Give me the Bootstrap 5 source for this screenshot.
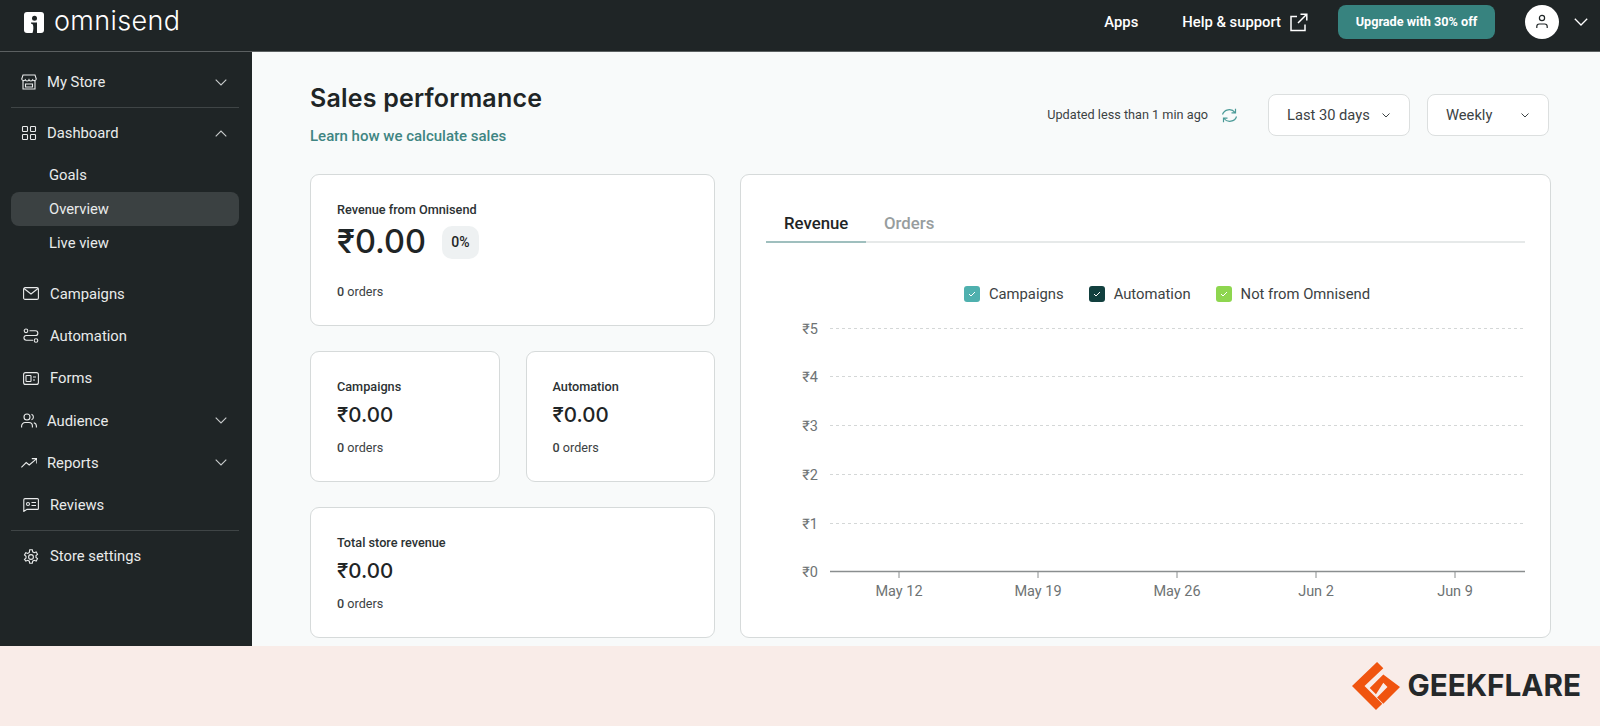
<!DOCTYPE html>
<html lang="en">
<head>
  <meta charset="UTF-8" />
  <title>Omnisend - Sales performance</title>
  <link href="https://cdn.jsdelivr.net/npm/bootstrap@5.3.3/dist/css/bootstrap.min.css" rel="stylesheet">
  <style>
    html, body { height: 726px; overflow: hidden; }
    body { font-family: Roboto, "Liberation Sans", sans-serif; background: #f9ece8; color: #1f2526; }
    .app { height: 646px; overflow: hidden; }
    .topbar { height: 52px; padding-bottom: 7px; background: #1f2526; border-bottom: 1px solid #5b6061; color: #fff; }
    .logo-text { font-family: Inter, sans-serif; font-weight: 300; font-size: 27px; letter-spacing: .35px; line-height: 1; margin-left: 10px; padding-bottom: 3px; }
    .top-link { font-size: 14.8px; font-weight: 500; color: #fff; text-decoration: none; }
    .btn-upgrade { width: 157px; height: 34px; padding: 0; border-radius: 8px; background: #37837f; color: #fff; font-size: 12.7px; font-weight: 700; border: 0; }
    .avatar { width: 34px; height: 34px; background: #fff; }
    .sidebar { width: 252px; background: #1f2526; color: #e9ebeb; font-size: 14.8px; padding-top: 9px; flex-shrink: 0; }
    .side-item { height: 42.3px; padding: 0 25px 0 23px; gap: 11px; }
    .side-item.caret { padding-left: 21px; gap: 10px; }
    .side-item .chev { margin-left: auto; }
    .side-sub { height: 34px; margin: 0 13px 0 11px; padding-left: 38px; border-radius: 8px; }
    .side-sub.active { background: #3b4142; }
    .side-line { height: 1px; margin: 0 13px 0 11px; background: #3f4546; }
    .main { background: #f8fafa; padding: 30px 51px 0 58px; }
    .page-title { font-family: Inter, sans-serif; font-size: 25px; font-weight: 600; line-height: 32px; letter-spacing: .2px; margin: 0; }
    .learn { display: block; margin-top: 12px; height: 20px; line-height: 20px; color: #3f8582; font-size: 15px; font-weight: 500; text-decoration: none; }
    .updated { font-size: 12.7px; color: #3c4243; }
    .select-box { height: 42px; background: #fff; border: 1px solid #dcdfdf; border-radius: 8px; font-size: 14.7px; color: #3c4243; padding: 0 19px 0 18px; }
    .cols { gap: 25px; margin-top: 28px; }
    .left { width: 405px; flex-shrink: 0; }
    .half { flex: 1 1 0; }
    .stat { border-radius: 9px; border-color: #d6dada; }
    .stat .card-body { padding: 25px 26px 0; }
    .stat-label { font-size: 12.7px; font-weight: 500; line-height: 20px; color: #2c3233; }
    .stat-value { font-family: Inter, sans-serif; font-weight: 500; font-size: 20.5px; line-height: 30px; margin-top: 3px; }
    .stat-value.big { font-size: 32.5px; line-height: 40px; margin-top: 2px; }
    .stat-orders { font-size: 12.6px; line-height: 20px; margin-top: 8px; color: #3c4243; }
    .stat-orders b { font-weight: 500; }
    .pct { width: 37px; height: 33px; border-radius: 10px; background: #eef1f2; font-size: 14px; font-weight: 500; }
    .chart-card { padding: 27px 25px 0; }
    .tabs { height: 41px; border-bottom: 2px solid #e6e9e9; }
    .tab { width: 100px; height: 41px; padding-left: 18px; font-size: 16.8px; font-weight: 500; line-height: 42px; color: #979d9e; }
    .tab.active { color: #1f2526; border-bottom: 2px solid #9fbfbe; }
    .legend { margin-top: 41px; margin-bottom: 12px; padding-left: 43px; gap: 25px; font-size: 14.8px; color: #3c4243; line-height: 20px; }
    .legend .gap-2 { gap: 9px !important; }
    .swatch { width: 16px; height: 16px; border-radius: 3px; }
    .chart-svg { display: block; }
    .chart-svg text { font-family: Roboto, sans-serif; font-size: 14.5px; fill: #6e7374; }
    .footer-band { height: 80px; padding-right: 19px; }
    .gf-text { font-family: Inter, sans-serif; font-weight: 700; font-size: 29.7px; color: #25282a; line-height: 1; margin-left: 7px; }
  </style>
</head>
<body>
  <div class="app d-flex flex-column">
    <header class="topbar d-flex align-items-center flex-shrink-0">
      <svg class="ms-4" width="20" height="21" viewBox="0 0 20 21"><rect width="20" height="21" rx="3" fill="#fff"/><circle cx="10.500" cy="6.200" r="2.500" fill="#1f2526"/><path d="M7 10.500h6V21H8.500C9.500 18 9.600 15 9 13c-.3-.9-1-1.300-2-1.300z" fill="#1f2526"/></svg>
      <span class="logo-text">omnisend</span>
      <nav class="ms-auto d-flex align-items-center">
        <a class="top-link" href="#">Apps</a>
        <a class="top-link d-flex align-items-center" href="#" style="margin-left:44px">Help &amp; support
          <svg class="ms-2" width="19" height="19" viewBox="0 0 19 19" fill="none" stroke="#fff" stroke-width="1.5"><path d="M8 3.500H2v14h14v-6M9 10 17.500 1.500M11.500 1.200h6.300v6.300"/></svg>
        </a>
        <button class="btn btn-upgrade" style="margin-left:30px">Upgrade with 30% off</button>
        <span class="avatar rounded-circle d-flex align-items-center justify-content-center" style="margin-left:30px">
          <svg width="16" height="16" viewBox="0 0 16 16" fill="none" stroke="#1f2526" stroke-width="1.200"><circle cx="8" cy="4" r="2.600"/><path d="M2.800 14v-1.500A2.500 2.500 0 0 1 5.300 10h5.400a2.500 2.500 0 0 1 2.500 2.500V14"/></svg>
        </span>
        <svg style="margin:0 12px 0 15px" width="14" height="8" viewBox="0 0 14 8" fill="none" stroke="#fff" stroke-width="1.300"><path d="M.8.800 7 7l6.200-6.200"/></svg>
      </nav>
    </header>
    <div class="d-flex flex-grow-1">
      <aside class="sidebar">
        <div class="side-item caret d-flex align-items-center">
          <svg width="16" height="16" viewBox="0 0 16 16" fill="none" stroke="#e9ebeb" stroke-width="1.100"><path d="M2 1h12l1.300 4a2 2 0 0 1-3.600.8 2 2 0 0 1-3.700 0 2 2 0 0 1-3.700 0A2 2 0 0 1 .7 5zM2 7v8h12V7M4.500 10h7v3h-7z"/></svg>
          My Store
          <svg class="chev" width="12" height="7" viewBox="0 0 12 7" fill="none" stroke="#c9cccc" stroke-width="1.100"><path d="M.7.700 6 6l5.300-5.300"/></svg>
        </div>
        <div class="side-line" style="margin-top:4px"></div>
        <div class="side-item caret d-flex align-items-center" style="margin-top:4px">
          <svg width="16" height="16" viewBox="0 0 16 16" fill="none" stroke="#e9ebeb" stroke-width="1.100"><rect x="1.500" y="1.500" width="5" height="5" rx=".8"/><rect x="9.500" y="1.500" width="5" height="5" rx=".8"/><rect x="1.500" y="9.500" width="5" height="5" rx=".8"/><rect x="9.500" y="9.500" width="5" height="5" rx=".8"/></svg>
          Dashboard
          <svg class="chev" width="12" height="7" viewBox="0 0 12 7" fill="none" stroke="#c9cccc" stroke-width="1.100"><path d="M.7 6.300 6 1l5.300 5.300"/></svg>
        </div>
        <div style="margin-top:3px">
          <div class="side-sub d-flex align-items-center">Goals</div>
          <div class="side-sub active d-flex align-items-center">Overview</div>
          <div class="side-sub d-flex align-items-center">Live view</div>
        </div>
        <div style="margin-top:13px">
          <div class="side-item d-flex align-items-center">
            <svg width="16" height="13" viewBox="0 0 16 13" fill="none" stroke="#e9ebeb" stroke-width="1.100"><rect x=".6" y=".6" width="14.800" height="11.800" rx="1.500"/><path d="M1 1.500 8 7l7-5.500"/></svg>
            Campaigns
          </div>
          <div class="side-item d-flex align-items-center">
            <svg width="16" height="16" viewBox="0 0 16 16" fill="none" stroke="#e9ebeb" stroke-width="1.100"><circle cx="3" cy="2.800" r="1.800"/><path d="M6.500 2.800h6a2.300 2.300 0 0 1 0 4.700H3.300a2.300 2.300 0 0 0 0 4.700H10"/><circle cx="13" cy="12.500" r="1.800"/></svg>
            Automation
          </div>
          <div class="side-item d-flex align-items-center">
            <svg width="16" height="13" viewBox="0 0 16 13" fill="none" stroke="#e9ebeb" stroke-width="1.100"><rect x=".6" y=".6" width="14.800" height="11.800" rx="2"/><rect x="3" y="3.500" width="5" height="6" rx=".6"/><path d="M10 5h3M10 8h2"/></svg>
            Forms
          </div>
          <div class="side-item caret d-flex align-items-center">
            <svg width="16" height="15" viewBox="0 0 16 15" fill="none" stroke="#e9ebeb" stroke-width="1.100"><circle cx="6" cy="4" r="3"/><path d="M.6 14.500V13a3.500 3.500 0 0 1 3.500-3.500h3.800a3.500 3.500 0 0 1 3.500 3.500v1.500M10.500 1.200a3 3 0 0 1 0 5.600M12.800 9.700a3.500 3.500 0 0 1 2.600 3.300v1.500"/></svg>
            Audience
            <svg class="chev" width="12" height="7" viewBox="0 0 12 7" fill="none" stroke="#c9cccc" stroke-width="1.100"><path d="M.7.700 6 6l5.300-5.300"/></svg>
          </div>
          <div class="side-item caret d-flex align-items-center">
            <svg width="16" height="10" viewBox="0 0 16 10" fill="none" stroke="#e9ebeb" stroke-width="1.100"><path d="M.4 9.400 5.200 4.500l3 2.500L15.500.8M10.800.6h5v5"/></svg>
            Reports
            <svg class="chev" width="12" height="7" viewBox="0 0 12 7" fill="none" stroke="#c9cccc" stroke-width="1.100"><path d="M.7.700 6 6l5.300-5.300"/></svg>
          </div>
          <div class="side-item d-flex align-items-center">
            <svg width="16" height="14" viewBox="0 0 16 14" fill="none" stroke="#e9ebeb" stroke-width="1.100"><path d="M2 .6h12.400a1 1 0 0 1 1 1v8.800a1 1 0 0 1-1 1H4L.8 13.400V1.800A1.200 1.200 0 0 1 2 .6z"/><circle cx="5" cy="6" r="1.500"/><path d="M8.500 4.500H13M8.500 7.500H13"/></svg>
            Reviews
          </div>
        </div>
        <div class="side-line" style="margin-top:4px"></div>
        <div class="side-item d-flex align-items-center" style="margin-top:4px">
          <svg width="16" height="16" viewBox="0 0 16 16" fill="none" stroke="#e9ebeb" stroke-width="1.100"><circle cx="8" cy="8" r="2.400"/><path d="M6.700.8h2.600l.4 2 1.500.9 2-.7 1.300 2.300-1.500 1.300v1.800l1.500 1.300-1.300 2.300-2-.7-1.500.9-.4 2H6.700l-.4-2-1.500-.9-2 .7L1.500 10.400 3 9.100V7.300L1.500 6l1.300-2.300 2 .7 1.500-.9z"/></svg>
          Store settings
        </div>
      </aside>
      <main class="main flex-grow-1">
        <div class="d-flex justify-content-between align-items-start">
          <div>
            <h1 class="page-title">Sales performance</h1>
            <a class="learn" href="#">Learn how we calculate sales</a>
          </div>
          <div class="d-flex align-items-center" style="margin:12px 2px 0 0">
            <span class="updated">Updated less than 1 min ago</span>
            <svg style="margin-left:13px" width="17" height="15" viewBox="0 0 17 15" fill="none" stroke="#4a9a97" stroke-width="1.200"><path d="M1.500 6.500A7 6.500 0 0 1 14 4.500M14.500.8v4h-4M15.500 8.500A7 6.500 0 0 1 3 10.500M2.500 14.200v-4h4"/></svg>
            <div class="select-box d-flex align-items-center justify-content-between" style="width:142px;margin-left:30px">Last 30 days
              <svg width="8" height="5" viewBox="0 0 8 5" fill="none" stroke="#3c4243" stroke-width="1"><path d="M.5.500 4 4 7.500.500"/></svg>
            </div>
            <div class="select-box d-flex align-items-center justify-content-between" style="width:122px;margin-left:17px">Weekly
              <svg width="8" height="5" viewBox="0 0 8 5" fill="none" stroke="#3c4243" stroke-width="1"><path d="M.5.500 4 4 7.500.500"/></svg>
            </div>
          </div>
        </div>
        <div class="cols d-flex">
          <div class="left d-flex flex-column">
            <div class="card stat" style="height:152px">
              <div class="card-body">
                <div class="stat-label">Revenue from Omnisend</div>
                <div class="d-flex align-items-center">
                  <div class="stat-value big">₹0.00</div>
                  <span class="pct d-flex align-items-center justify-content-center" style="margin:2px 0 0 16px">0%</span>
                </div>
                <div class="stat-orders" style="margin-top:20px"><b>0</b> orders</div>
              </div>
            </div>
            <div class="d-flex" style="gap:26px;margin-top:25px">
              <div class="card stat half" style="height:131px">
                <div class="card-body">
                  <div class="stat-label">Campaigns</div>
                  <div class="stat-value">₹0.00</div>
                  <div class="stat-orders"><b>0</b> orders</div>
                </div>
              </div>
              <div class="card stat half" style="height:131px">
                <div class="card-body">
                  <div class="stat-label">Automation</div>
                  <div class="stat-value">₹0.00</div>
                  <div class="stat-orders"><b>0</b> orders</div>
                </div>
              </div>
            </div>
            <div class="card stat" style="height:131px;margin-top:25px">
              <div class="card-body">
                <div class="stat-label">Total store revenue</div>
                <div class="stat-value">₹0.00</div>
                <div class="stat-orders"><b>0</b> orders</div>
              </div>
            </div>
          </div>
          <div class="card stat chart-card flex-grow-1" style="height:464px">
            <div class="tabs d-flex">
              <div class="tab active">Revenue</div>
              <div class="tab">Orders</div>
            </div>
            <div class="legend d-flex justify-content-center">
              <span class="d-flex align-items-center gap-2"><span class="swatch d-flex align-items-center justify-content-center" style="background:#4fb0ae"><svg width="8" height="6" viewBox="0 0 8 6" fill="none" stroke="#fff"><path d="M1 3l2 2 4-4"/></svg></span>Campaigns</span>
              <span class="d-flex align-items-center gap-2"><span class="swatch d-flex align-items-center justify-content-center" style="background:#12403f"><svg width="8" height="6" viewBox="0 0 8 6" fill="none" stroke="#fff"><path d="M1 3l2 2 4-4"/></svg></span>Automation</span>
              <span class="d-flex align-items-center gap-2"><span class="swatch d-flex align-items-center justify-content-center" style="background:#8ed64f"><svg width="8" height="6" viewBox="0 0 8 6" fill="none" stroke="#fff"><path d="M1 3l2 2 4-4"/></svg></span>Not from Omnisend</span>
            </div>
            <svg id="chart" class="chart-svg" width="759" height="300" viewBox="766 316 759 300"></svg>
          </div>
        </div>
      </main>
    </div>
  </div>
  <footer class="footer-band d-flex align-items-center justify-content-end">
    <svg width="48" height="48" viewBox="0 0 46 46"><path fill="#f0540f" d="M24 0 0 23 23 46 29 40 12 23 30 6zM17 25 30 12 46 24 30 40 24 34 34 24 30 20 23 31z"/></svg>
    <span class="gf-text">GEEKFLARE</span>
  </footer>
  <script>
    // chart axes: one dashed line per rupee, weekly ticks along the bottom
    const chart = document.getElementById("chart");
    const yRows = [[5, 328.5], [4, 376.5], [3, 425.5], [2, 474.5], [1, 523.5]];
    const xTicks = [["May 12", 899], ["May 19", 1038], ["May 26", 1177], ["Jun 2", 1316], ["Jun 9", 1455]];
    let svg = "";
    yRows.forEach(([v, y]) => {
      svg += `<line x1="830" x2="1525" y1="${y}" y2="${y}" stroke="#d4d7d7" stroke-dasharray="3 3"/>`;
      svg += `<text x="818" y="${y + 5}" text-anchor="end">₹${v}</text>`;
    });
    svg += `<text x="818" y="577" text-anchor="end">₹0</text>`;
    svg += `<line x1="830" x2="1525" y1="571.500" y2="571.500" stroke="#8a8e8f" stroke-width="1.500"/>`;
    xTicks.forEach(([label, x]) => {
      svg += `<line x1="${x}" x2="${x}" y1="571" y2="578" stroke="#8a8e8f"/>`;
      svg += `<text x="${x}" y="596" text-anchor="middle">${label}</text>`;
    });
    chart.innerHTML = svg;
  </script>
  <script src="https://cdn.jsdelivr.net/npm/bootstrap@5.3.3/dist/js/bootstrap.bundle.min.js"></script>
</body>
</html>
